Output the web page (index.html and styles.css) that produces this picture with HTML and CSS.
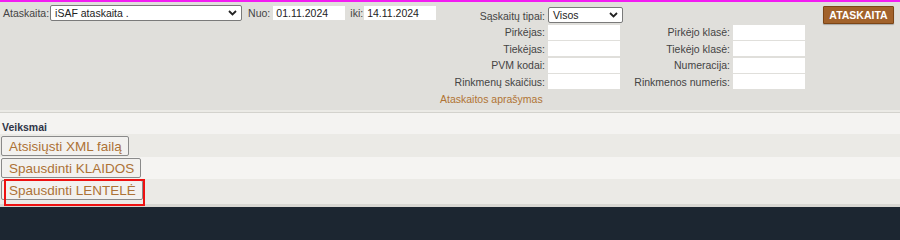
FILE: index.html
```html
<!DOCTYPE html>
<html lang="lt">
<head>
<meta charset="utf-8">
<title>iSAF ataskaita</title>
<link rel="stylesheet" href="styles.css">
</head>
<body>
<div class="topline"></div>
<div class="panel">
  <div class="left">
    <span class="lbl lbl-ataskaita">Ataskaita:</span>
    <div class="sel sel-main"><span>iSAF ataskaita .</span><svg class="chev" width="9" height="6" viewBox="0 0 9 6"><path d="M1 1l3.5 3.5L8 1" fill="none" stroke="#222" stroke-width="1.8"/></svg></div>
    <span class="lbl lbl-nuo">Nuo:</span>
    <input class="inp date" value="01.11.2024">
    <span class="lbl lbl-iki">iki:</span>
    <input class="inp date" value="14.11.2024">
  </div>
  <div class="filters">
    <span class="flbl">Sąskaitų tipai:</span>
    <div class="sel sel-small"><span>Visos</span><svg class="chev" width="9" height="6" viewBox="0 0 9 6"><path d="M1 1l3.5 3.5L8 1" fill="none" stroke="#222" stroke-width="1.8"/></svg></div>
    <span></span><span></span>
    <span class="flbl">Pirkėjas:</span><input class="inp f">
    <span class="flbl">Pirkėjo klasė:</span><input class="inp f">
    <span class="flbl">Tiekėjas:</span><input class="inp f">
    <span class="flbl">Tiekėjo klasė:</span><input class="inp f">
    <span class="flbl">PVM kodai:</span><input class="inp f">
    <span class="flbl">Numeracija:</span><input class="inp f">
    <span class="flbl">Rinkmenų skaičius:</span><input class="inp f">
    <span class="flbl">Rinkmenos numeris:</span><input class="inp f">
    <a class="desc" href="#">Ataskaitos aprašymas</a>
  </div>
  <div class="runwrap"><button class="run">ATASKAITA</button></div>
</div>
<div class="sep"></div>
<div class="actions">
  <div class="arow head">Veiksmai</div>
  <div class="arow dark"><button class="abtn">Atsisiųsti XML failą</button></div>
  <div class="arow light"><button class="abtn">Spausdinti KLAIDOS</button></div>
  <div class="arow dark last"><button class="abtn">Spausdinti LENTELĖ</button><div class="mark"></div></div>
</div>
<div class="foot"></div>
<div class="darkbar"></div>
</body>
</html>
```

FILE: styles.css
```css
html {
  background: #1c2631;
}

html, body {
  margin: 0;
  padding: 0;
  font-family: "Liberation Sans", Arial, sans-serif;
  font-size: 10.5px;
  color: #3a3a3a;
  overflow: hidden;
}

body {
  background: #e0dfdb;
}

.topline {
  height: 2px;
  background: #f21cf2;
}

.panel {
  height: 108px;
  background: #e0dfdb;
  display: flex;
  align-items: flex-start;
}

.left {
  width: 437px;
  padding: 3px 0 0 3px;
  box-sizing: border-box;
  display: flex;
  align-items: center;
  height: 19px;
}

.lbl {
  color: #444;
  line-height: 16px;
}

.lbl-ataskaita { margin-right: 1px; }
.lbl-nuo { margin-left: 6px; margin-right: 3px; }
.lbl-iki { margin-left: 5px; margin-right: 1px; }

.sel {
  box-sizing: border-box;
  background: #fff;
  border: 1px solid #7a7a7a;
  border-radius: 2px;
  display: flex;
  align-items: center;
  justify-content: space-between;
  padding: 0 4px 0 4px;
  color: #222;
  font-size: 10.5px;
}

.sel-main {
  width: 192px;
  height: 16px;
}

.sel-small {
  width: 75px;
  height: 16px;
  margin-top: -1px;
}

.chev { display: block; }

.inp {
  box-sizing: border-box;
  border: none;
  outline: none;
  background: #fff;
  margin: 0;
  padding: 0 3px;
  font-family: "Liberation Sans", Arial, sans-serif;
  font-size: 10.5px;
  color: #222;
  height: 14px;
}

.date {
  width: 72px;
}

.filters {
  margin-left: 3px;
  margin-top: 6px;
  display: grid;
  grid-template-columns: 106px 72px 109px 72px;
  column-gap: 2px;
  grid-auto-rows: 15px;
  row-gap: 1.6px;
  align-items: center;
}

.flbl {
  text-align: right;
  color: #444;
  padding-right: 1px;
  white-space: nowrap;
}

.f {
  width: 72px;
  height: 15px;
}

.desc {
  grid-column: 1 / span 2;
  color: #b07434;
  text-decoration: none;
  margin-top: 2px;
}

.runwrap {
  margin-left: 18px;
  margin-top: 4px;
}

.run {
  box-sizing: border-box;
  width: 71px;
  height: 18px;
  background: #a2622b;
  border: 1px solid #7c4516;
  border-radius: 1px;
  color: #fff;
  font-family: "Liberation Sans", Arial, sans-serif;
  font-weight: bold;
  font-size: 10.5px;
  padding: 0;
  box-shadow: 0 1px 1px rgba(0,0,0,0.25);
}

.sep {
  height: 2px;
  background: #ebeae6;
  border-bottom: 1px solid #d3d2cd;
}

.actions {
  background: #ebeae6;
}

.arow {
  display: flex;
  align-items: flex-start;
  padding-left: 1px;
}

.head {
  height: 21px;
  box-sizing: border-box;
  padding: 8px 0 0 2px;
  font-weight: bold;
  color: #2f3547;
  background: #f4f3f1;
  line-height: 12px;
}

.dark {
  background: #ebeae6;
}

.light {
  background: #f5f4f2;
}

.arow.dark:not(.last) {
  height: 23px;
  padding-top: 2px;
  box-sizing: border-box;
}

.arow.light {
  height: 22px;
  padding-top: 1px;
  box-sizing: border-box;
}

.arow.last {
  height: 25px;
  padding-top: 1px;
  box-sizing: border-box;
  position: relative;
  z-index: 2;
}

.abtn {
  box-sizing: border-box;
  height: 20px;
  background: #f2f1ef;
  border: 1px solid #8a8a8a;
  border-radius: 2px;
  color: #ad7236;
  font-family: "Liberation Sans", Arial, sans-serif;
  font-size: 13.5px;
  padding: 0 6px 0 7px;
  line-height: 17px;
}

.mark {
  position: absolute;
  left: 4px;
  top: 0;
  width: 141px;
  height: 27px;
  box-sizing: border-box;
  border: 2px solid #ee1111;
  z-index: 3;
}

.foot {
  height: 3px;
  background: #d8d7d2;
}

.darkbar {
  height: 6px;
  background: #1c2631;
}
```
